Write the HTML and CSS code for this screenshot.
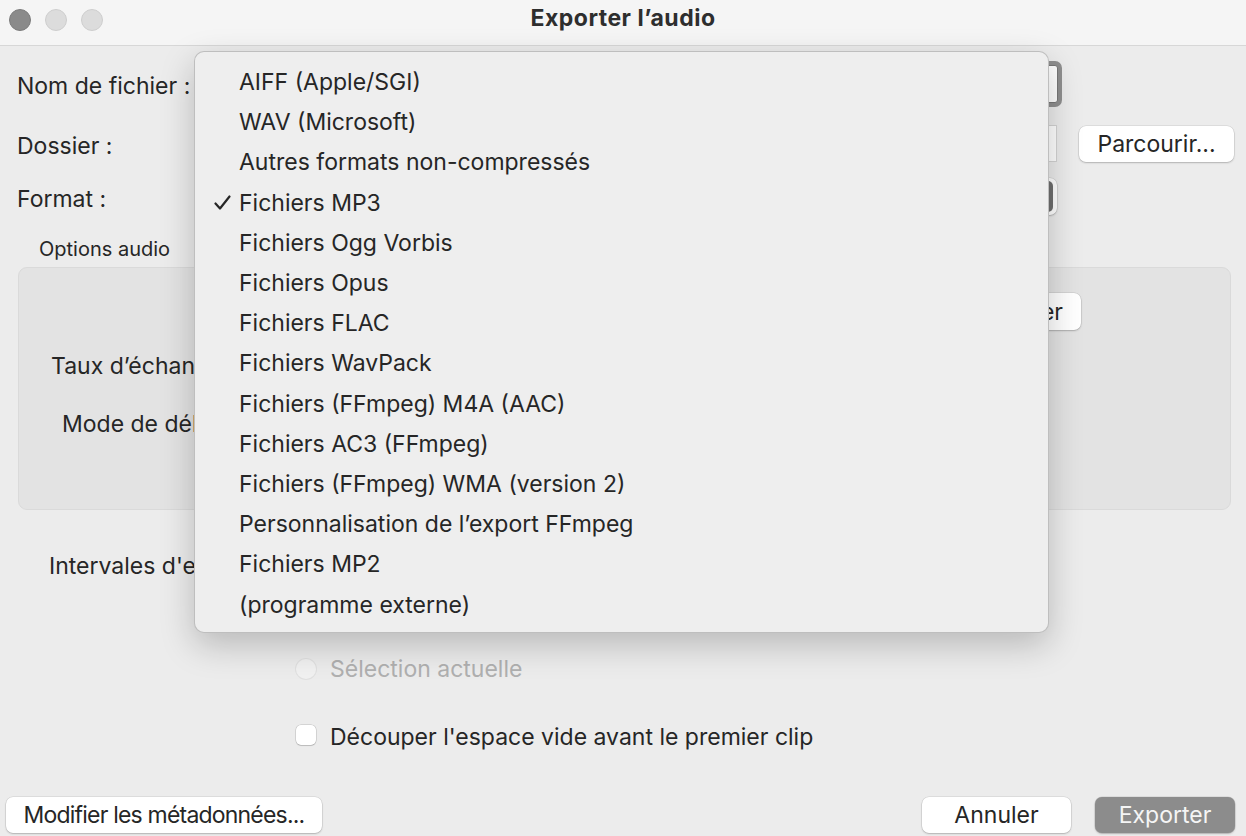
FILE: index.html
```html
<!DOCTYPE html>
<html lang="fr">

<head>
    <meta charset="UTF-8">
    <meta name="viewport" content="width=device-width, initial-scale=1.0">
    <title>Exporter l’audio</title>
    <link rel="stylesheet" href="styles.css">
</head>

<body>
    <div class="window">
        <header class="titlebar">
            <div class="lights">
                <span class="light light-close"></span>
                <span class="light"></span>
                <span class="light"></span>
            </div>
            <h1 class="title">Exporter l’audio</h1>
            <div></div>
        </header>

        <main class="content">
            <div class="form-row row-name">
                <span class="row-label">Nom de fichier :</span>
                <div class="text-field focused"></div>
            </div>
            <div class="form-row row-folder">
                <span class="row-label">Dossier :</span>
                <div class="text-field"></div>
                <button class="btn btn-browse">Parcourir...</button>
            </div>
            <div class="form-row row-format">
                <span class="row-label">Format :</span>
                <div class="popup">
                    <span class="popup-arrows"></span>
                </div>
            </div>

            <div class="group-title">Options audio</div>
            <div class="group-box">
                <div class="group-top">
                    <button class="btn btn-config">Configurer</button>
                </div>
                <div class="group-row row-rate">Taux d’échantillonnage :</div>
                <div class="group-row row-mode">Mode de débit :</div>
            </div>

            <div class="range-section">
                <span class="range-label">Intervales d'exportation :</span>
                <div class="radio-list">
                    <div class="radio-row"><span class="radio"></span>Projet entier</div>
                    <div class="radio-row"><span class="radio"></span>Plusieurs fichiers</div>
                    <div class="radio-row disabled"><span class="radio"></span>Sélection actuelle</div>
                </div>
            </div>

            <div class="check-row">
                <span class="checkbox"></span>Découper l'espace vide avant le premier clip
            </div>
        </main>

        <footer class="footer">
            <button class="btn btn-meta">Modifier les métadonnées...</button>
            <div class="footer-right">
                <button class="btn btn-cancel">Annuler</button>
                <button class="btn btn-default">Exporter</button>
            </div>
        </footer>

        <div class="format-menu">
            <div class="menu-item"><span class="check"></span>AIFF (Apple/SGI)</div>
            <div class="menu-item"><span class="check"></span>WAV (Microsoft)</div>
            <div class="menu-item"><span class="check"></span>Autres formats non-compressés</div>
            <div class="menu-item">
                <span class="check">
                    <svg width="17" height="16" viewBox="0 0 17 16">
                        <path d="M1.5 8.5 L6 13.5 L15.5 1.5" fill="none" stroke="#262626" stroke-width="2.2"
                            stroke-linecap="round" stroke-linejoin="round" />
                    </svg>
                </span>Fichiers MP3
            </div>
            <div class="menu-item"><span class="check"></span>Fichiers Ogg Vorbis</div>
            <div class="menu-item"><span class="check"></span>Fichiers Opus</div>
            <div class="menu-item"><span class="check"></span>Fichiers FLAC</div>
            <div class="menu-item"><span class="check"></span>Fichiers WavPack</div>
            <div class="menu-item"><span class="check"></span>Fichiers (FFmpeg) M4A (AAC)</div>
            <div class="menu-item"><span class="check"></span>Fichiers AC3 (FFmpeg)</div>
            <div class="menu-item"><span class="check"></span>Fichiers (FFmpeg) WMA (version 2)</div>
            <div class="menu-item"><span class="check"></span>Personnalisation de l’export FFmpeg</div>
            <div class="menu-item"><span class="check"></span>Fichiers MP2</div>
            <div class="menu-item"><span class="check"></span>(programme externe)</div>
        </div>
    </div>
</body>

</html>
```

FILE: styles.css
```css
* {
    box-sizing: border-box;
}

body {
    margin: 0;
    padding: 0;
    background-color: #ececec;
    font-family: Inter, "Noto Sans", sans-serif;
    font-size: 23px;
    color: #262626;
    overflow: hidden;
}

.window {
    position: relative;
    height: 836px;
    display: flex;
    flex-direction: column;
}

/* title bar */

.titlebar {
    height: 46px;
    background-color: #f5f5f5;
    border-bottom: 1px solid #d7d7d7;
    display: grid;
    grid-template-columns: 1fr auto 1fr;
    align-items: start;
}

.lights {
    display: flex;
    gap: 14px;
    padding: 9px 0 0 9px;
}

.light {
    width: 22px;
    height: 22px;
    border-radius: 50%;
    background-color: #dcdcdc;
    border: 1px solid #cecece;
}

.light-close {
    background-color: #8a8a8a;
    border-color: #7c7c7c;
}

.title {
    margin: 0;
    padding-top: 4px;
    font-size: 23px;
    line-height: 28px;
    letter-spacing: 0.5px;
    font-weight: 700;
    color: #2e2e2e;
}

/* form rows */

.content {
    padding-left: 17px;
}

.form-row {
    display: flex;
    align-items: center;
}

.row-label {
    width: 183px;
    padding-top: 4px;
    white-space: nowrap;
}

.row-name {
    margin-top: 15px;
    height: 46px;
}

.row-folder {
    margin-top: 18px;
    height: 37px;
}

.row-format {
    margin-top: 16px;
    height: 37px;
}

.text-field {
    height: 37px;
    width: 857px;
    background-color: #fff;
    border: 1px solid #d3d3d3;
}

.text-field.focused {
    width: 854px;
    height: 38px;
    margin-left: 4px;
    border-color: #777;
    border-radius: 3px;
    box-shadow: 0 0 0 4px #8f8f8f;
}

.btn {
    font-family: inherit;
    font-size: 23px;
    color: #262626;
    height: 36px;
    background-color: #fff;
    border: none;
    border-radius: 7px;
    box-shadow: 0 0 0 0.5px rgba(0, 0, 0, 0.12), 0 1px 2px rgba(0, 0, 0, 0.2);
    padding: 0 18px;
    white-space: nowrap;
}

.btn-browse {
    margin-left: 22px;
    width: 155px;
}

.popup {
    width: 857px;
    height: 37px;
    background-color: #fff;
    border-radius: 7px;
    box-shadow: 0 0 0 0.5px rgba(0, 0, 0, 0.12), 0 1px 2px rgba(0, 0, 0, 0.2);
    display: flex;
    align-items: center;
    justify-content: flex-end;
    padding: 3px 4px;
}

.popup-arrows {
    width: 34px;
    height: 31px;
    background-color: #6f6f6f;
    border-radius: 5px;
}

/* audio options group */

.group-title {
    margin-top: 24px;
    padding-left: 22px;
    font-size: 20px;
    line-height: 20px;
}

.group-box {
    margin: 8px 15px 0 1px;
    height: 243px;
    background-color: #e3e3e3;
    border: 1px solid #dadada;
    border-radius: 9px;
    padding-top: 25px;
}

.group-top {
    display: flex;
    justify-content: flex-end;
    padding-right: 149px;
}

.btn-config {
    height: 37px;
}

.group-row {
    line-height: 26px;
}

.row-rate {
    margin-top: 23px;
    padding-left: 32px;
}

.row-mode {
    margin-top: 32px;
    padding-left: 43px;
}

/* export range */

.range-section {
    display: grid;
    grid-template-columns: 279px 1fr;
    margin-top: 43px;
    line-height: 26px;
}

.range-label {
    padding-left: 32px;
    white-space: nowrap;
}

.radio-list {
    display: flex;
    flex-direction: column;
    gap: 25.5px;
}

.radio-row {
    display: flex;
    align-items: center;
    gap: 14px;
}

.radio {
    width: 20px;
    height: 20px;
    border-radius: 50%;
    background-color: #fff;
    box-shadow: 0 0 0 0.5px rgba(0, 0, 0, 0.15), 0 1px 1px rgba(0, 0, 0, 0.12);
}

.radio-row.disabled {
    color: #b0b0b0;
}

.radio-row.disabled .radio {
    background-color: #f1f1f1;
    box-shadow: 0 0 0 1px #e0e0e0;
}

.check-row {
    display: flex;
    align-items: center;
    gap: 14px;
    margin-top: 42px;
    margin-left: 279px;
    line-height: 26px;
}

.checkbox {
    width: 20px;
    height: 20px;
    border-radius: 5px;
    background-color: #fff;
    box-shadow: 0 0 0 0.5px rgba(0, 0, 0, 0.2), 0 1px 1px rgba(0, 0, 0, 0.12);
    margin-top: -4px;
}

/* footer */

.footer {
    margin-top: auto;
    display: flex;
    justify-content: space-between;
    padding: 0 11px 3px 6px;
}

.btn-meta {
    width: 316px;
    padding: 0;
    letter-spacing: -0.8px;
}

.footer-right {
    display: flex;
    gap: 24px;
}

.btn-cancel {
    width: 149px;
}

.btn-default {
    width: 140px;
    background-color: #8c8c8c;
    color: #f5f5f5;
}

/* format dropdown */

.format-menu {
    position: absolute;
    left: 194px;
    top: 51px;
    width: 855px;
    height: 582px;
    background-color: #eeeeee;
    border: 1px solid rgba(0, 0, 0, 0.2);
    border-radius: 10px;
    box-shadow: 0 12px 34px rgba(0, 0, 0, 0.22);
    padding: 10px 0;
}

.menu-item {
    height: 40.2px;
    display: flex;
    align-items: center;
    white-space: nowrap;
}

.check {
    width: 44px;
    padding-left: 19px;
    display: flex;
    align-items: center;
}
```
